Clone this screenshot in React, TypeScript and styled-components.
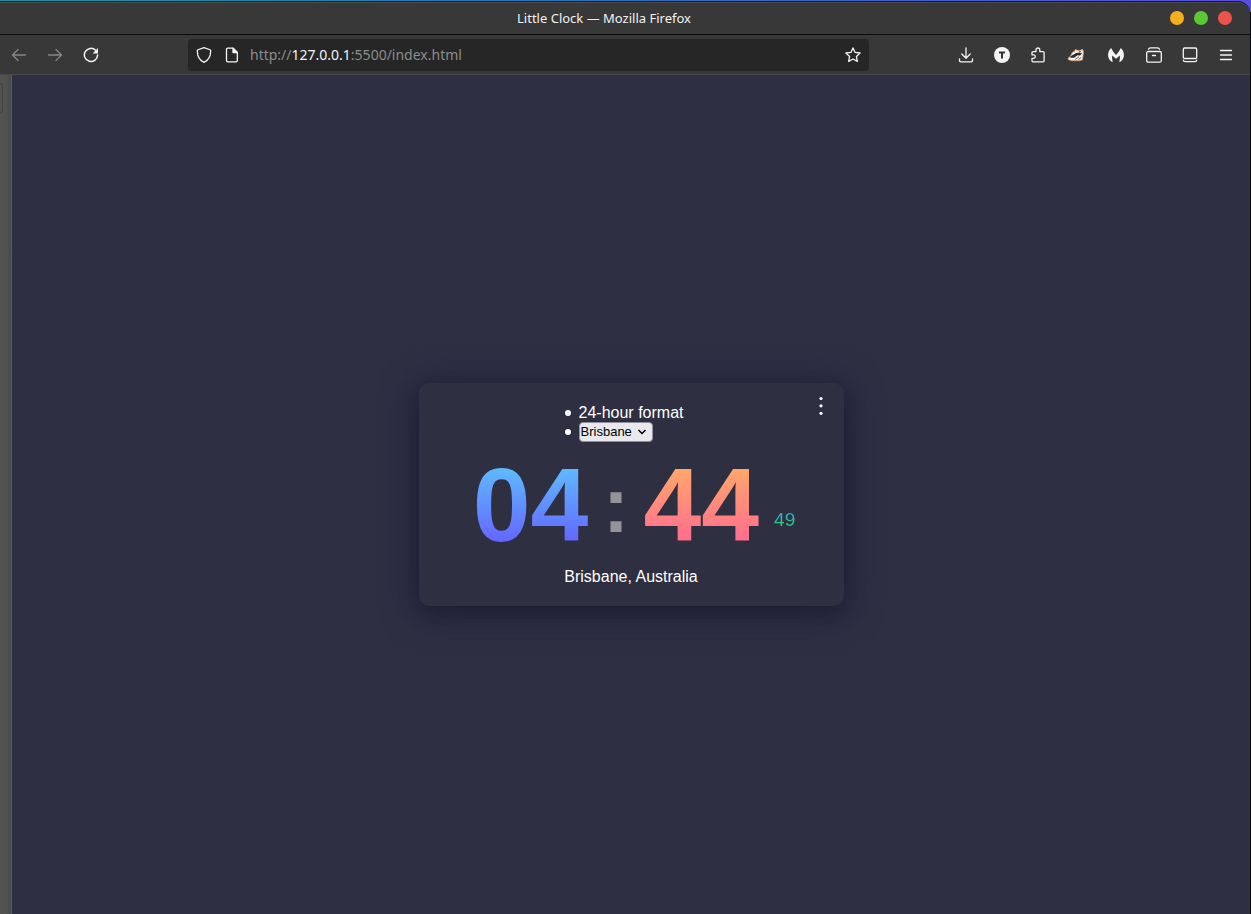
import React from "react";
import styled, { createGlobalStyle } from "styled-components";

const Global = createGlobalStyle`
  * { box-sizing: border-box; }
  body { margin: 0; background: #0b0b16; font-family: "Liberation Sans", Arial, sans-serif; }
`;

const Desktop = styled.div`
  min-height: 100vh;
  display: flex;
  flex-direction: column;
  padding: 2px 1px 0 0;
  background: linear-gradient(90deg, #0f9aa8, #2f6cc0 55%, #5a4fe0) top / 100% 12px no-repeat, #07070e;
`;

const TitleBar = styled.header`
  height: 33px;
  flex: none;
  display: grid;
  grid-template-columns: 1fr auto 1fr;
  align-items: center;
  padding: 0 18px 2px 0;
  background: #383838;
  border-top: 1px solid #4c4c4c;
  border-bottom: 1px solid #0c0c0c;
  border-radius: 0 12px 0 0;
  box-shadow: 0 -1px 0 #101830;
`;

const Title = styled.h1`
  grid-column: 2;
  margin: 0;
  padding-right: 24px;
  font: 400 13px/20px "Noto Sans", sans-serif;
  color: #f2f2f2;
`;

const WindowButtons = styled.div`
  display: flex;
  justify-content: flex-end;
  gap: 10px;
`;

const WindowButton = styled.button<{ $color: string }>`
  width: 14px;
  height: 14px;
  padding: 0;
  border: 0;
  border-radius: 50%;
  background: ${(p) => p.$color};
`;

const Toolbar = styled.nav`
  height: 40px;
  flex: none;
  display: grid;
  grid-template-columns: 188px minmax(0, 1fr) 381px;
  align-items: center;
  background: #383838;
  border-bottom: 1px solid #484848;
`;

const ToolGroup = styled.div<{ $end?: boolean }>`
  display: flex;
  align-items: center;
  gap: 12px;
  padding: ${(p) => (p.$end ? "0 12px" : "0 7px")};
  justify-content: ${(p) => (p.$end ? "flex-end" : "flex-start")};
`;

const IconButton = styled.button<{ $dim?: boolean; $wide?: boolean }>`
  width: ${(p) => (p.$wide ? 28 : 24)}px;
  height: 24px;
  padding: 0;
  display: grid;
  place-items: center;
  border: 0;
  background: none;
  color: ${(p) => (p.$dim ? "#858585" : "#f4f4f4")};
`;

const AddressBar = styled.div`
  height: 32px;
  display: flex;
  align-items: center;
  gap: 4px;
  padding: 0 4px;
  border-radius: 4px;
  background: #262626;
`;

const Address = styled.a`
  flex: 1;
  padding-left: 2px;
  font: 400 14px/20px "Noto Sans", sans-serif;
  color: #8c8c8c;
  text-decoration: none;
  white-space: nowrap;
`;

const Host = styled.span`
  color: #f4f4f4;
`;

const Body = styled.div`
  flex: 1;
  display: flex;
`;

const Sidebar = styled.aside`
  width: 12px;
  flex: none;
  padding-top: 8px;
  background: linear-gradient(90deg, #525252 50%, #484848);
  border-right: 1px solid #5a5a5a;
`;

const SidebarTab = styled.div`
  width: 3px;
  height: 30px;
  border: 1px solid #444;
  border-left: 0;
  border-radius: 0 4px 4px 0;
`;

const Page = styled.main`
  flex: 1;
  display: grid;
  place-items: center;
  background: #2f2f44;
`;

const Card = styled.section`
  position: relative;
  width: 425px;
  max-width: 100%;
  padding: 20px;
  display: flex;
  flex-direction: column;
  align-items: center;
  border-radius: 10px;
  background: #2e2f40;
  color: #fff;
  font-size: 16px;
  line-height: 19px;
  box-shadow: 0 8px 20px rgba(10, 16, 36, 0.25), 0 4px 36px rgba(10, 16, 36, 0.5);
`;

const MenuButton = styled.button`
  position: absolute;
  top: 12px;
  right: 16px;
  width: 14px;
  height: 22px;
  padding: 0;
  border: 0;
  background: none;
`;

const Options = styled.ul`
  margin: 0;
  padding: 0 14px 0 0;
  list-style: none;
`;

const Option = styled.li`
  display: flex;
  align-items: center;
  min-height: 19px;

  &::before {
    content: "";
    width: 6px;
    height: 6px;
    margin-right: 8px;
    border-radius: 50%;
    background: #fff;
  }
`;

const SelectBox = styled.span`
  position: relative;
  display: flex;
`;

const CitySelect = styled.select`
  appearance: none;
  width: 74px;
  height: 20px;
  padding: 0 0 0 1px;
  border: 1px solid #8f8f9d;
  border-radius: 4px;
  background: #e9e9ed;
  color: #000;
  font: 13px/18px "Liberation Sans", Arial, sans-serif;
`;

const Chevron = styled.svg`
  position: absolute;
  right: 6px;
  top: 6px;
  pointer-events: none;
`;

const Time = styled.div`
  display: flex;
  align-items: center;
  margin: 3px 0 2px;
  padding-left: 6px;
  line-height: 120px;
`;

const Digits = styled.span<{ $from: string; $to: string }>`
  font-size: 104px;
  font-weight: 700;
  color: transparent;
  background: linear-gradient(${(p) => p.$from} 20%, ${(p) => p.$to} 82%);
  background-clip: text;
  -webkit-background-clip: text;
`;

const Colon = styled.span`
  width: 55px;
  text-align: center;
  font-size: 78px;
  font-weight: 700;
  color: #949494;
`;

const Seconds = styled.span`
  padding: 30px 0 0 15px;
  font-size: 19px;
  line-height: 24px;
  color: transparent;
  background: linear-gradient(#2f9fe0 60%, #2ed573 90%);
  background-clip: text;
  -webkit-background-clip: text;
`;

const Place = styled.p`
  margin: 0;
`;

const Icon = ({ children, size = 16 }: { children: React.ReactNode; size?: number }) => (
  <svg width={size} height={size} viewBox="0 0 16 16" fill="none" stroke="currentColor" strokeWidth="1.3" strokeLinecap="round" strokeLinejoin="round" aria-hidden="true">
    {children}
  </svg>
);

export default function App() {
  return (
    <>
      <Global />
      <Desktop>
        <TitleBar>
          <Title>Little Clock — Mozilla Firefox</Title>
          <WindowButtons>
            <WindowButton $color="#f3b01c" aria-label="Minimize" />
            <WindowButton $color="#5bc934" aria-label="Maximize" />
            <WindowButton $color="#ea544b" aria-label="Close" />
          </WindowButtons>
        </TitleBar>
        <Toolbar>
          <ToolGroup>
            <IconButton $dim aria-label="Back">
              <Icon><path d="M14.5 8H1.5M7 2.5 1.5 8 7 13.5" /></Icon>
            </IconButton>
            <IconButton $dim aria-label="Forward">
              <Icon><path d="M1.5 8h13M9 2.5 14.5 8 9 13.5" /></Icon>
            </IconButton>
            <IconButton aria-label="Reload">
              <Icon>
                <path d="M12.6 3.2A6.6 6.6 0 1 0 14.6 8" strokeWidth="1.5" />
                <path d="M15 1v5.4H9.6z" fill="currentColor" stroke="none" />
              </Icon>
            </IconButton>
          </ToolGroup>
          <AddressBar>
            <IconButton aria-label="Tracking protection">
              <Icon><path d="M8 .7 14.6 3C15 8.5 12.8 13 8 15.4 3.2 13 1 8.5 1.4 3z" /></Icon>
            </IconButton>
            <IconButton aria-label="Site information">
              <Icon>
                <path d="M3.7 1.2h5.4l4.2 4.2v8.2a1.2 1.2 0 0 1-1.2 1.2H3.7a1.2 1.2 0 0 1-1.2-1.2V2.400a1.2 1.2 0 0 1 1.2-1.2z" />
                <path d="M9 1.2V5.500h4.3z" fill="currentColor" />
              </Icon>
            </IconButton>
            <Address href="http://127.0.0.1:5500/index.html">
              http://<Host>127.0.0.1</Host>:5500/index.html
            </Address>
            <IconButton aria-label="Bookmark">
              <Icon><path d="m8 .9 2.1 4.500 5 .6-3.7 3.4 1 5L8 12l-4.4 2.400 1-5L.9 6l5-.6z" /></Icon>
            </IconButton>
          </AddressBar>
          <ToolGroup $end>
            <IconButton aria-label="Downloads">
              <Icon><path d="M8 .8V11M3.8 7 8 11.2 12.2 7M1.500 12v1.500a1.300 1.300 0 0 0 1.300 1.300h10.400a1.300 1.300 0 0 0 1.300-1.300V12" /></Icon>
            </IconButton>
            <IconButton aria-label="Account">
              <Icon>
                <circle cx="8" cy="8" r="8" fill="currentColor" stroke="none" />
                <path d="M5 5.500h6M8 5.500v6" stroke="#333" strokeWidth="2" strokeLinecap="butt" />
              </Icon>
            </IconButton>
            <IconButton aria-label="Extensions">
              <Icon><path d="M2 5.600a1 1 0 0 1 1-1h3V2.900a1.900 1.900 0 0 1 3.800 0v1.700h3.300a1 1 0 0 1 1 1v8.200a1 1 0 0 1-1 1H3a1 1 0 0 1-1-1v-2.500h1.600a1.700 1.700 0 0 0 0-3.400H2z" /></Icon>
            </IconButton>
            <IconButton $wide aria-label="Privacy Badger">
              <svg width="18" height="14" viewBox="0 0 18 14" aria-hidden="true">
                <path d="M1 10.500 4 7 5.500 4 7.500 3.200 8 1.500 12 2.500 16 1.200 16.500 5 15.500 12 12.500 12.800H5L1.500 12z" fill="#eeeae6" stroke="#c98752" strokeWidth="1" strokeDasharray="2 1" />
                <path d="M3 8.800 8 5.200 12.500 4.600 15 5.500 13 7.500 10.500 7.200 7 9.800H3.500z" fill="#2b2b2b" />
                <path d="M5.500 6.500 10.500 3.500M4 11h6l4-3" stroke="#fff" strokeWidth="1" fill="none" />
                <path d="M8 11.500 12 8.800M11.500 11.500 14 9.500M12 3.500h2" stroke="#666" strokeWidth="1" fill="none" />
              </svg>
            </IconButton>
            <IconButton $wide aria-label="Malwarebytes">
              <Icon>
                <path d="M3.200 1C4.500 4 6.300 6.300 8 8 9.700 6.300 11.500 4 12.800 1c3.500 3 4.300 8.600 1.200 12.200-.8.900-1.700 1.600-2.800 1.900.8-2.400.9-4.500.5-6.700L8 11.800 4.300 8.400c-.4 2.200-.3 4.300.5 6.700-1.100-.3-2-1-2.800-1.900C-1.100 9.600-.3 4 3.200 1z" fill="currentColor" stroke="none" />
              </Icon>
            </IconButton>
            <IconButton aria-label="Container tabs">
              <Icon><rect x=".7" y="4.500" width="14.600" height="10.700" rx="1.500" /><path d="M2.500 2.200Q3 .8 4.500.8h7q1.500 0 2 1.400M6.500 8.500h3" /></Icon>
            </IconButton>
            <IconButton aria-label="Library">
              <Icon><rect x="1.300" y="1" width="13.400" height="10.500" rx="1.300" /><path d="M1.300 13.200q.2 1.500 1.700 1.500h10q1.500 0 1.700-1.500" /></Icon>
            </IconButton>
            <IconButton aria-label="Application menu">
              <Icon><path d="M2.500 3.500h11M2.500 8h11M2.500 12.500h11" /></Icon>
            </IconButton>
          </ToolGroup>
        </Toolbar>
        <Body>
          <Sidebar><SidebarTab /></Sidebar>
          <Page>
            <Card>
              <MenuButton aria-label="Clock options">
                <svg width="14" height="22" viewBox="0 0 14 22" fill="#fff" aria-hidden="true">
                  <circle cx="7" cy="3.500" r="1.600" />
                  <circle cx="7" cy="10.800" r="1.600" />
                  <circle cx="7" cy="18.300" r="1.600" />
                </svg>
              </MenuButton>
              <Options>
                <Option>24-hour format</Option>
                <Option>
                  <SelectBox>
                    <CitySelect aria-label="City" defaultValue="Brisbane">
                      <option>Brisbane</option>
                    </CitySelect>
                    <Chevron width="10" height="8" viewBox="0 0 10 8" fill="none" stroke="#000" strokeWidth="1.500">
                      <path d="m1.500 2 3.500 3.500L8.500 2" />
                    </Chevron>
                  </SelectBox>
                </Option>
              </Options>
              <Time>
                <Digits $from="#5fb9ff" $to="#6464ff">04</Digits>
                <Colon>:</Colon>
                <Digits $from="#ffa76a" $to="#ff6b90">44</Digits>
                <Seconds>49</Seconds>
              </Time>
              <Place>Brisbane, Australia</Place>
            </Card>
          </Page>
        </Body>
      </Desktop>
    </>
  );
}
